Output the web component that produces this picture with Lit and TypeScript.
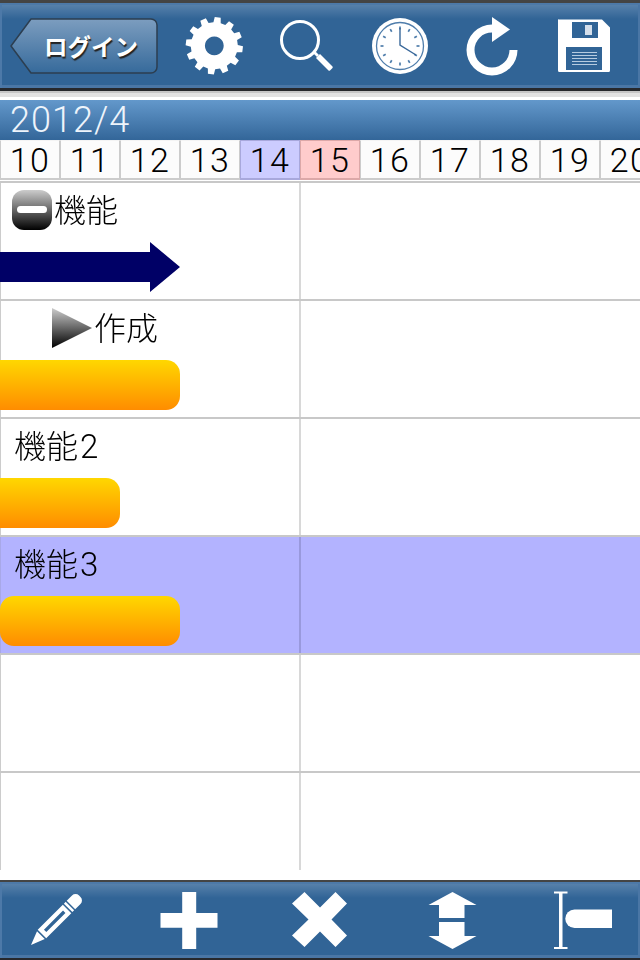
import { LitElement, html, css, svg } from 'lit';
import { customElement } from 'lit/decorators.js';

type Task = {
  label: string;
  num?: string;
  marker?: 'minus' | 'tri';
  indent?: boolean;
  kind?: 'arrow' | 'bar';
  left?: number;
  width?: number;
  selected?: boolean;
};

const DAYS = [10, 11, 12, 13, 14, 15, 16, 17, 18, 19, 20];

const TASKS: Task[] = [
  { label: '機能', marker: 'minus', kind: 'arrow', width: 180 },
  { label: '作成', marker: 'tri', indent: true, kind: 'bar', left: -20, width: 200 },
  { label: '機能', num: '2', kind: 'bar', left: -20, width: 140 },
  { label: '機能', num: '3', kind: 'bar', left: 0, width: 180, selected: true },
  { label: '' },
  { label: '' },
];

// gear outline with square-ish teeth
function gearPath(cx: number, cy: number, teeth: number, outer: number, inner: number, rot: number) {
  const pts: string[] = [];
  const step = (Math.PI * 2) / teeth;
  for (let i = 0; i < teeth; i++) {
    const a = rot + i * step;
    const at = (r: number, t: number) =>
      `${(cx + r * Math.cos(a + t * step)).toFixed(2)} ${(cy + r * Math.sin(a + t * step)).toFixed(2)}`;
    pts.push(at(inner, -0.3), at(outer, -0.2), at(outer, 0.2), at(inner, 0.3));
  }
  return `M${pts.join('L')}Z`;
}

function clockTicks() {
  const out = [];
  for (let i = 0; i < 12; i++) {
    const a = (i * Math.PI) / 6;
    const x1 = 400 + 16.5 * Math.cos(a);
    const y1 = 46 + 16.5 * Math.sin(a);
    const x2 = 400 + 19.5 * Math.cos(a);
    const y2 = 46 + 19.5 * Math.sin(a);
    out.push(svg`<line x1=${x1} y1=${y1} x2=${x2} y2=${y2} />`);
  }
  return out;
}

@customElement('app-root')
export class AppRoot extends LitElement {
  static styles = css`
    :host {
      display: block;
      width: 640px;
      height: 960px;
      overflow: hidden;
      background: #fff;
      font-family: Roboto, 'Noto Sans CJK JP', sans-serif;
    }

    .bar-top, .bar-bottom {
      box-sizing: border-box;
      display: flex;
      align-items: center;
      background: #316496;
      box-shadow: inset 2px 2px 0 #4d79a8, inset -2px -3px 0 #4a76a5;
      background-image: linear-gradient(#5c84ad 0, #316496 50%, #316496 100%);
      background-size: 100% 32px;
      background-repeat: no-repeat;
    }
    .bar-top {
      height: 91px;
      padding: 1px 0 0 10px;
      gap: 28px;
      border-top: 3px solid #444;
      border-bottom: 3px solid #26282c;
    }
    .bar-bottom {
      height: 80px;
      margin-top: 10px;
      padding-left: 25px;
      gap: 67.5px;
      border-top: 2px solid #444;
      border-bottom: 2px solid #26282c;
    }
    svg.icon {
      display: block;
      width: 64px;
      height: 64px;
      flex: none;
      fill: #fff;
    }

    .back {
      position: relative;
      width: 148px;
      height: 56px;
      margin-right: -4px;
      display: flex;
      align-items: center;
      justify-content: center;
      flex: none;
    }
    .back svg {
      position: absolute;
      left: 0;
      top: 0;
    }
    .back span {
      position: relative;
      margin-left: 14px;
      color: #fff;
      font: bold 23.5px 'Noto Sans CJK JP', sans-serif;
      text-shadow: 1px 2px 1px #222;
    }

    .shade {
      height: 9px;
      background: linear-gradient(#c6c6c6 0 2px, #e2e2e2 2px 6px, #fff 6px);
    }

    .month {
      box-sizing: border-box;
      height: 40px;
      padding-left: 10px;
      color: #eef4fb;
      font-size: 36px;
      font-weight: 300;
      letter-spacing: 1px;
      line-height: 40px;
      background: linear-gradient(#6398cb, #336699);
    }

    .days {
      display: flex;
      height: 40px;
    }
    .day {
      box-sizing: border-box;
      flex: 0 0 60px;
      height: 40px;
      border: 1px solid #ccc;
      border-top-color: #f4f4f4;
      border-bottom-width: 2px;
      background: #fcfcfc;
      color: #000;
      font-size: 34px;
      font-weight: 300;
      letter-spacing: 1.5px;
      line-height: 38px;
      text-align: center;
    }
    .day.today {
      background: #ccccff;
      border-color: #a8a8dc;
    }
    .day.mark {
      background: #ffcccc;
      border-color: #dca8a8;
    }

    .grid {
      height: 687px;
      margin-top: 1px;
      overflow: hidden;
      border-top: 2px solid #c8c8c8;
    }
    .row {
      box-sizing: border-box;
      display: grid;
      grid-template-columns: 301px 339px;
      height: 118px;
      border-bottom: 2px solid #c8c8c8;
    }
    .row:last-child {
      border-bottom: none;
    }
    .row.selected {
      background: #b3b3ff;
    }
    .task {
      box-sizing: border-box;
      border-right: 2px solid #d8d8d8;
      overflow: hidden;
      background: linear-gradient(#ccc, #ccc) 0 0 / 1px 100% no-repeat;
    }
    .row.selected .task {
      border-right-color: #9999dd;
      background: linear-gradient(#a8a8e8, #a8a8e8) 0 0 / 1px 100% no-repeat;
    }
    .label {
      display: flex;
      align-items: center;
      height: 54px;
      padding-left: 12px;
      color: #000;
      font: 300 32px Roboto, 'Noto Sans CJK JP', sans-serif;
      white-space: nowrap;
    }
    .label.indent {
      padding-left: 52px;
    }
    .name {
      margin: 0 0 4px 2px;
      will-change: transform;
    }
    .num {
      margin-left: 2px;
      font-size: 33px;
    }
    .minus {
      position: relative;
      width: 40px;
      height: 40px;
      border-radius: 12px;
      background: linear-gradient(#ccc, #000);
      flex: none;
    }
    .minus::after {
      content: '';
      position: absolute;
      left: 5px;
      top: 16px;
      width: 30px;
      height: 7px;
      border-radius: 4px;
      background: #fff;
    }
    .tri {
      width: 40px;
      height: 40px;
      background: linear-gradient(#ccc, #000);
      clip-path: polygon(0 0, 100% 50%, 0 100%);
      flex: none;
    }
    .gantt {
      height: 50px;
      margin-top: 5px;
    }
    .pill {
      height: 50px;
      border-radius: 14px;
      background: linear-gradient(#ffd700, #ff8c00);
    }
    .arrow {
      display: block;
      height: 50px;
    }
  `;

  private topIcons() {
    return html`
      <svg class="icon" viewBox="182 14 64 64">
        <path fill-rule="evenodd" d="${gearPath(214.3, 45.8, 12, 28.7, 23.5, 0.12)} M214.3 36.4a9.4 9.4 0 1 0 .01 0Z" />
      </svg>
      <svg class="icon" viewBox="274 14 64 64">
        <circle cx="300" cy="40" r="18.500" fill="none" stroke="#fff" stroke-width="3" />
        <path d="M313 53l2-2 4 4-2 2z" />
        <path d="M316 58l4-4 12.500 12.500q.5 .8 0 1.500l-2.500 2.500q-.8 .5-1.500 0z" />
      </svg>
      <svg class="icon" viewBox="366 14 64 64">
        <circle cx="400" cy="46" r="28" />
        <circle cx="400" cy="46" r="23.500" fill="none" stroke="#4f7dab" stroke-width="1.300" />
        <g stroke="#4f7dab" stroke-width="1.700" fill="none">${clockTicks()}</g>
        <path d="M400 28V45L416 55" fill="none" stroke="#39689a" stroke-width="1.400" />
      </svg>
      <svg class="icon" viewBox="458 14 64 64">
        <path d="M492 24.500a25.500 25.500 0 1 0 25.500 25.500h-8a17.500 17.500 0 1 1-17.500-17.500z" />
        <path d="M492 17l18 12.500L492 42z" />
      </svg>
      <svg class="icon" viewBox="550 14 64 64">
        <path fill-rule="evenodd" d="M559 19.500h43l8 8v43a1.500 1.500 0 0 1-1.500 1.500H559.500a1.500 1.500 0 0 1-1.500-1.500v-50a1.500 1.500 0 0 1 1-1.500zM572 22v16h26V22zM566 47v23h36V47z" />
        <rect x="585" y="25" width="7" height="10" fill="#d5dfeb" />
        <g fill="#b6cbe0">
          <rect x="572" y="52" width="25" height="1" />
          <rect x="572" y="55" width="25" height="1" />
          <rect x="572" y="58" width="25" height="1" />
          <rect x="572" y="61" width="25" height="1" />
          <rect x="572" y="64" width="25" height="1" />
        </g>
      </svg>
    `;
  }

  private bottomIcons() {
    return html`
      <svg class="icon" viewBox="25 888 64 64">
        <g transform="translate(31 945) rotate(-45)">
          <!-- tip -->
          <path d="M0 0L14 -5.500V5.500z" />
          <!-- body with slot -->
          <path fill-rule="evenodd" d="M15.500 -6H51V6H15.500zM20 -1.700V1.700H47V-1.700z" />
          <!-- band and eraser -->
          <rect x="52.500" y="-6" width="2.500" height="12" />
          <path d="M56.500 -6H64a5 5 0 0 1 5 5V1a5 5 0 0 1-5 5H56.500z" />
        </g>
      </svg>
      <svg class="icon" viewBox="156.500 888 64 64">
        <path d="M181.700 892h14v21h21.300v14.700h-21.300V949h-14v-21.300H160V913h21.700z" />
      </svg>
      <svg class="icon" viewBox="288 888 64 64">
        <path d="M304.500 892L320 907.500 335.500 892 347 903.500 331.500 919.500 347 935.500 335.500 947 320 931.500 304.500 947 292 935.500 308.500 919.500 292 903.500z" />
      </svg>
      <svg class="icon" viewBox="419.500 888 64 64">
        <path d="M452 892l24 13h-12v13h-25.500v-13H428zM438.500 922H464v14h12l-24 13-24-13h10.500z" />
      </svg>
      <svg class="icon" viewBox="553 888 64 64">
        <path d="M556 891.500h13.500v2h-5v53.500h5v2H556v-2h5v-53.500h-5z" />
        <path d="M576.500 909.500H614v18.500h-37.500a9.250 9.250 0 0 1 0-18.500z" />
      </svg>
    `;
  }

  private renderBar(t: Task) {
    if (t.kind === 'arrow') {
      return html`<svg class="arrow" width=${t.width} height="50" viewBox="0 0 180 50">
        <path d="M0 10H150V0L180 25 150 50V40H0z" fill="#000066" />
      </svg>`;
    }
    if (t.kind === 'bar') {
      return html`<div class="pill" style="width:${t.width}px;margin-left:${t.left ?? 0}px"></div>`;
    }
    return '';
  }

  render() {
    return html`
      <div class="bar-top">
        <div class="back">
          <svg width="148" height="56" viewBox="0 0 148 56">
            <defs>
              <linearGradient id="back" x1="0" y1="0" x2="0" y2="1">
                <stop offset="0" stop-color="#7c9dbf" />
                <stop offset="1" stop-color="#366a9b" />
              </linearGradient>
            </defs>
            <path d="M1 28L21 1H141a6 6 0 0 1 6 6V49a6 6 0 0 1-6 6H21z" fill="url(#back)" stroke="#2c3e50" stroke-width="1.500" stroke-linejoin="round" />
          </svg>
          <span>ログイン</span>
        </div>
        ${this.topIcons()}
      </div>
      <div class="shade"></div>
      <div class="month">2012/4</div>
      <div class="days">
        ${DAYS.map(d => html`<div class="day ${d === 14 ? 'today' : d === 15 ? 'mark' : ''}">${d}</div>`)}
      </div>
      <div class="grid">
        ${TASKS.map(t => html`
          <div class="row ${t.selected ? 'selected' : ''}">
            <div class="task">
              <div class="label ${t.indent ? 'indent' : ''}">
                ${t.marker === 'minus' ? html`<span class="minus"></span>` : ''}
                ${t.marker === 'tri' ? html`<span class="tri"></span>` : ''}
                <span class="name">${t.label}${t.num ? html`<span class="num">${t.num}</span>` : ''}</span>
              </div>
              <div class="gantt">${this.renderBar(t)}</div>
            </div>
            <div></div>
          </div>
        `)}
      </div>
      <div class="bar-bottom">${this.bottomIcons()}</div>
    `;
  }
}
